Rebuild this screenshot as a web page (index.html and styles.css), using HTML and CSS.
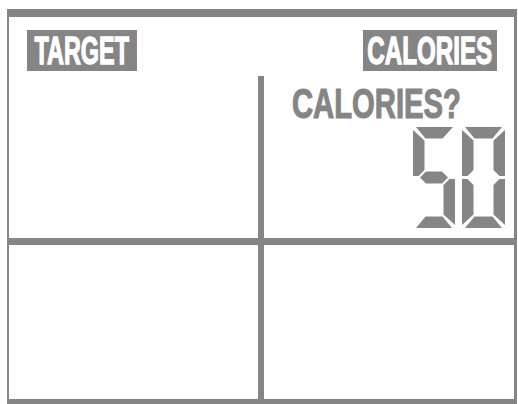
FILE: index.html
```html
<!DOCTYPE html>
<html>
<head>
<meta charset="utf-8">
<link rel="stylesheet" href="styles.css">
</head>
<body>
<div class="panel">
  <div class="header">
    <div class="label label-target"><span>TARGET</span></div>
    <div class="label label-cal"><span>CALORIES</span></div>
  </div>
  <div class="grid">
    <div class="cell"></div>
    <div class="cell cell-readout">
      <div class="question"><span>CALORIES?</span></div>
      <svg class="digits" width="92" height="101" viewBox="0 0 92 101" aria-label="50">
        <g class="seg">
          <polygon points="3,0 40,0 29.5,11.5 12.5,11.5"/>
          <polygon points="0,3 11.5,13.5 11.5,43 5.5,49 0,49"/>
          <polygon points="7,50.5 13,44.5 29,44.5 35,50.5 29,56.5 13,56.5"/>
          <polygon points="42,52 42,98 30.5,87.5 30.5,58 36.5,52"/>
          <polygon points="12.5,89.5 29.5,89.5 39,101 3,101"/>
        </g>
        <g class="seg" transform="translate(49,0)">
          <polygon points="3,0 40,0 30.5,11.5 12.5,11.5"/>
          <polygon points="0,3 11.5,13.5 11.5,43 5.5,49 0,49"/>
          <polygon points="43,3 43,49 37.5,49 31.5,43 31.5,13.5"/>
          <polygon points="0,52 5.5,52 11.5,58 11.5,87.5 0,98"/>
          <polygon points="43,52 43,98 31.5,87.5 31.5,58 37.5,52"/>
          <polygon points="12.5,89.5 30.5,89.5 40,101 3,101"/>
        </g>
      </svg>
    </div>
    <div class="cell"></div>
    <div class="cell"></div>
  </div>
</div>
</body>
</html>
```
FILE: styles.css
```css
html, body {
  margin: 0;
  padding: 0;
  background: #ffffff;
}
body {
  width: 518px;
  height: 404px;
  overflow: hidden;
  font-family: "Liberation Sans", Arial, sans-serif;
}
.panel {
  box-sizing: border-box;
  margin: 9px 1px 0 7px;
  width: 510px;
  height: 395px;
  border-style: solid;
  border-color: #858585;
  border-width: 8px 3px 5px 2px;
  display: flex;
  flex-direction: column;
  background: #fff;
}
.header {
  height: 59px;
  box-sizing: border-box;
  padding: 13px 17px 0 18px;
  display: flex;
  justify-content: space-between;
  align-items: flex-start;
}
.label {
  height: 41px;
  background: #858585;
  color: #ffffff;
  display: flex;
  align-items: center;
  justify-content: center;
  overflow: visible;
  flex-shrink: 0;
}
.label span {
  display: block;
  font-weight: bold;
  font-size: 39px;
  line-height: 1;
  white-space: nowrap;
  transform: scaleX(0.6);
  flex-shrink: 0;
  -webkit-text-stroke: 1.4px #ffffff;
}
.label-target { width: 110px; }
.label-cal { width: 134px; }
.label-cal span { transform: scaleX(0.62); }
.grid {
  flex: 1;
  display: grid;
  grid-template-columns: 249px 250px;
  grid-template-rows: 162px 154px;
  column-gap: 6px;
  row-gap: 7px;
  background: #858585;
}
.cell {
  background: #ffffff;
}
.cell-readout {
  display: flex;
  flex-direction: column;
  padding-top: 6px;
  box-sizing: border-box;
}
.question {
  padding-left: 28px;
  height: 45px;
  color: #858585;
}
.question span {
  display: inline-block;
  font-weight: bold;
  font-size: 43px;
  line-height: 1;
  white-space: nowrap;
  transform: scaleX(0.68);
  transform-origin: left center;
  -webkit-text-stroke: 1.2px #858585;
}
.digits {
  display: block;
  align-self: flex-end;
  margin-right: 9px;
}
.seg polygon {
  fill: #858585;
}
```
